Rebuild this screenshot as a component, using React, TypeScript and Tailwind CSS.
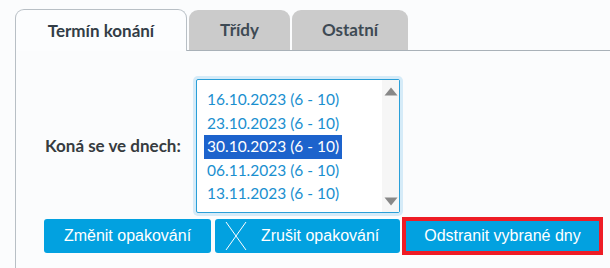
const dates = [
  '16.10.2023 (6 - 10)',
  '23.10.2023 (6 - 10)',
  '30.10.2023 (6 - 10)',
  '06.11.2023 (6 - 10)',
  '13.11.2023 (6 - 10)',
];

const ui = "font-['Lato','Noto_Sans',sans-serif]";
const btn =
  "h-[34px] bg-[#02a1e0] text-white text-[16px] font-['Liberation_Sans',Arial,sans-serif] flex items-center";

export default function App() {
  return (
    <div className={`w-[610px] h-[268px] overflow-hidden bg-[#fbfcfd] pt-[9px] ${ui}`}>
      {/* tabs */}
      <div className="flex items-end h-[42px]">
        <div className="w-[15px] h-full" />
        <div className="w-[172px] h-[42px] rounded-t-[9px] border border-b-0 border-[#b8bfc5] bg-[#fcfdfe] flex items-center justify-center text-[17px] font-bold text-[#333d47]">
          Termín konání
        </div>
        <div className="w-[2px] h-full border-b border-[#a9b1b8]" />
        <div className="w-[101px] h-[41px] rounded-t-[9px] bg-[#cbcbcb] border-b border-[#a9b1b8] flex items-center justify-center text-[17px] font-bold text-[#3e4a54]">
          Třídy
        </div>
        <div className="w-[2px] h-full border-b border-[#a9b1b8]" />
        <div className="w-[116px] h-[41px] rounded-t-[9px] bg-[#cbcbcb] border-b border-[#a9b1b8] flex items-center justify-center text-[17px] font-bold text-[#3e4a54]">
          Ostatní
        </div>
        <div className="flex-1 h-full border-b border-[#a9b1b8]" />
      </div>

      {/* panel */}
      <div className="ml-[15px] h-[220px] border-l border-[#b8bfc5] pt-[28px]">
        <div className="flex items-center">
          <div className="w-[180px] pl-[29px] text-[17px] font-bold text-[#363b40]">Koná se ve dnech:</div>
          <div className="w-[204px] h-[134px] border border-[#2a9fd8] rounded-[2px] shadow-[0_0_0_3px_#d5ebf8] bg-white flex">
            <div className="flex-1 pt-[8px] pl-[7px] text-[15.5px] leading-[23.5px] text-[#1a8fcf]">
              {dates.map((d, i) => (
                <div key={d}>
                  <span className={i === 2 ? 'px-[3px] bg-[#1d63cc] text-white inline-block' : 'px-[3px] inline-block'}>
                    {d}
                  </span>
                </div>
              ))}
            </div>
            <div className="w-[17px] bg-[#f6f6f6] flex flex-col items-center justify-between pt-[7px] pb-[6px]">
              <svg width="14" height="9" viewBox="0 0 14 9">
                <path d="M7 0.5 L13.5 8.5 L0.5 8.5 Z" fill="#888" />
              </svg>
              <svg width="14" height="9" viewBox="0 0 14 9">
                <path d="M0.5 0.5 L13.5 0.5 L7 8.5 Z" fill="#888" />
              </svg>
            </div>
          </div>
        </div>

        <div className="flex gap-[4px] mt-[6px] ml-[28px]">
          <button className={`${btn} rounded-[3px] w-[167px] justify-center`}>Změnit opakování</button>
          <button className={`${btn} rounded-[3px] w-[185px] pl-[10px] gap-[14px]`}>
            <svg width="22" height="30" viewBox="0 0 22 30">
              <path d="M1 1 L21 29 M21 1 L1 29" stroke="white" strokeWidth="1" fill="none" />
            </svg>
            Zrušit opakování
          </button>
          <button className={`${btn} rounded-none w-[197px] justify-center outline-[4px] outline-solid outline-[#ee1c25] outline-offset-[-2px]`}>
            Odstranit vybrané dny
          </button>
        </div>
      </div>
    </div>
  );
}
